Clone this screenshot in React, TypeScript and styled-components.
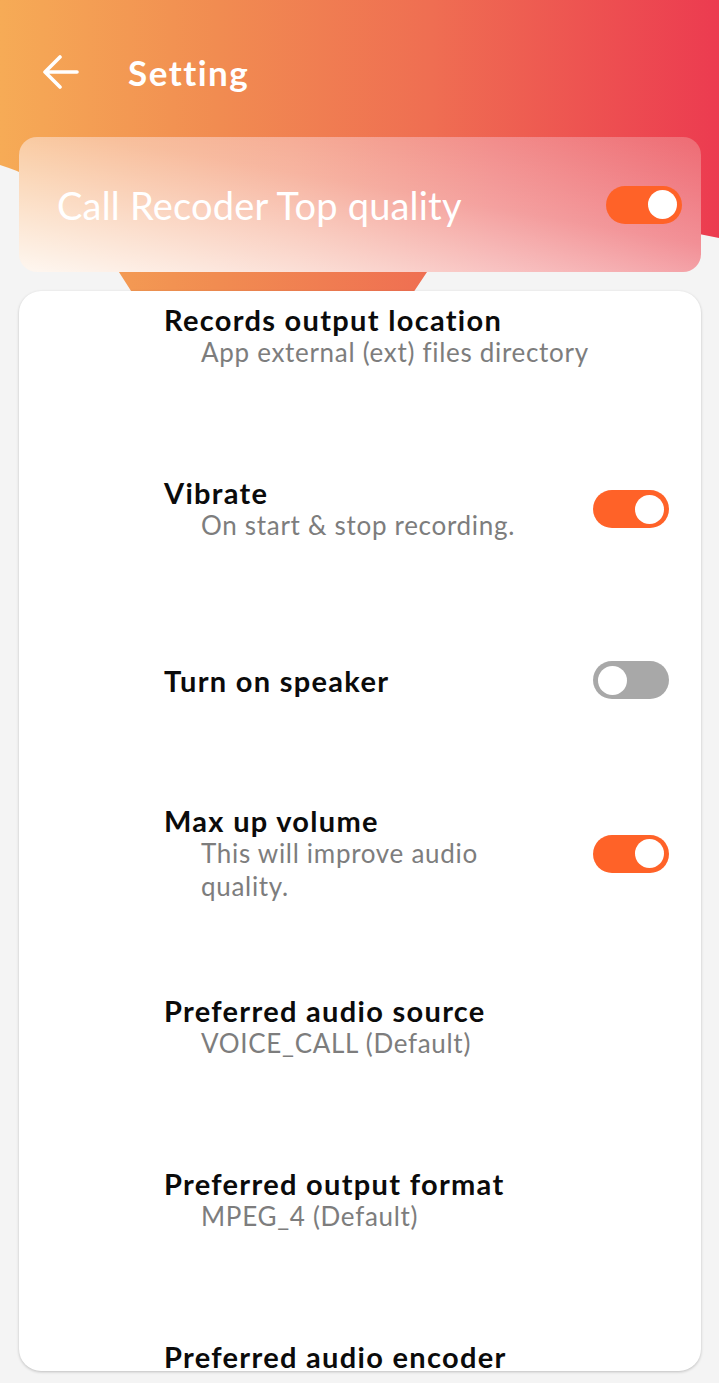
import React from 'react'
import styled, { createGlobalStyle } from 'styled-components'

const GlobalStyle = createGlobalStyle`
    html, body {
        margin: 0;
        padding: 0;
        background: #f4f4f4;
    }
    * {
        box-sizing: border-box;
    }
`

const Page = styled.div`
    position: relative;
    width: 719px;
    min-height: 1383px;
    padding-bottom: 12px;
    overflow: hidden;
    background: #f4f4f4;
    font-family: 'Lato', 'Noto Sans', sans-serif;
`
const HeaderShape = styled.svg`
    position: absolute;
    top: 0;
    left: 0;
    z-index: 0;
`
const Content = styled.div`
    position: relative;
    z-index: 1;
    display: flex;
    flex-direction: column;
`
const TopBar = styled.div`
    display: flex;
    align-items: center;
    gap: 49px;
    height: 137px;
    padding: 7px 0 0 43px;
`
const BackButton = styled.button`
    display: flex;
    padding: 0;
    border: 0;
    background: none;
`
const Title = styled.h1`
    margin: 0;
    font-size: 35px;
    font-weight: 700;
    line-height: 40px;
    letter-spacing: 1.5px;
    color: #ffffff;
`
const QualityCard = styled.div`
    display: flex;
    align-items: center;
    justify-content: space-between;
    height: 135px;
    margin: 0 18px 0 19px;
    padding: 0 19px 0 38px;
    border-radius: 18px;
    background:
        linear-gradient(
            190deg,
            rgba(255, 255, 255, 0.1) 0%,
            rgba(255, 255, 255, 0.32) 42%,
            rgba(255, 255, 255, 0.9) 100%
        ),
        linear-gradient(90deg, #f6ad6c 0%, #f39274 40%, #ef7472 70%, #ec5a64 100%);
`
const QualityText = styled.span`
    font-size: 38px;
    font-weight: 400;
    letter-spacing: 0.2px;
    color: #ffffff;
`
const SettingsCard = styled.div`
    display: flex;
    flex-direction: column;
    height: 1080px;
    margin: 19px 18px 0 19px;
    padding-top: 12px;
    border-radius: 22px;
    background: #ffffff;
    box-shadow: 0 1px 3px rgba(0, 0, 0, 0.22);
    overflow: hidden;
`
const Row = styled.div<{ $after: number }>`
    display: flex;
    align-items: center;
    flex-shrink: 0;
    margin-bottom: ${(p) => p.$after}px;
    padding: 0 32px 0 145px;
`
const RowText = styled.div`
    flex: 1;
    display: flex;
    flex-direction: column;
`
const RowTitle = styled.span`
    font-size: 29px;
    font-weight: 700;
    line-height: 33px;
    letter-spacing: 1.3px;
    color: #0b0b0b;
`
const RowSummary = styled.span<{ $narrow?: boolean }>`
    margin-left: 37px;
    max-width: ${(p) => (p.$narrow ? '330px' : 'none')};
    font-size: 26px;
    font-weight: 400;
    line-height: 33px;
    letter-spacing: 0.7px;
    color: #7d7d7d;
`
const Track = styled.span<{ $on: boolean }>`
    display: flex;
    justify-content: ${(p) => (p.$on ? 'flex-end' : 'flex-start')};
    align-items: center;
    flex-shrink: 0;
    width: 76px;
    height: 38px;
    padding: 0 5px;
    border-radius: 19px;
    background: ${(p) => (p.$on ? '#ff6228' : '#a8a8a8')};
`
const Knob = styled.span`
    width: 29px;
    height: 29px;
    border-radius: 50%;
    background: #ffffff;
`

const Switch = ({ on }: { on: boolean }) => (
    <Track $on={on}>
        <Knob />
    </Track>
)

type Pref = {
    title: string
    summary?: string
    toggle?: boolean
    after: number
}

const prefs: Pref[] = [
    { title: 'Records output location', summary: 'App external (ext) files directory', after: 107 },
    { title: 'Vibrate', summary: 'On start & stop recording.', toggle: true, after: 119 },
    { title: 'Turn on speaker', toggle: false, after: 105 },
    { title: 'Max up volume', summary: 'This will improve audio quality.', toggle: true, after: 91 },
    { title: 'Preferred audio source', summary: 'VOICE_CALL (Default)', after: 107 },
    { title: 'Preferred output format', summary: 'MPEG_4 (Default)', after: 107 },
    { title: 'Preferred audio encoder', summary: 'AAC (Default)', after: 107 },
]

const App = () => {
    return (
        <Page>
            <GlobalStyle />
            <HeaderShape width="719" height="340" viewBox="0 0 719 340">
                <defs>
                    <linearGradient id="headerFill" x1="0" y1="0" x2="1" y2="0">
                        <stop offset="0" stopColor="#f6ab56" />
                        <stop offset="0.3" stopColor="#f18c51" />
                        <stop offset="0.6" stopColor="#ef6e52" />
                        <stop offset="1" stopColor="#ec3b50" />
                    </linearGradient>
                </defs>
                <path
                    d="M0 0 H719 V238 C620 218 500 212 445 245 L405 305 Q273 345 140 305 L110 258 C85 215 45 178 0 165 Z"
                    fill="url(#headerFill)"
                />
            </HeaderShape>
            <Content>
                <TopBar>
                    <BackButton aria-label="Back">
                        <svg width="36" height="34" viewBox="0 0 36 34" fill="none">
                            <path
                                d="M34 17 H3 M17 2 L2 17 L17 32"
                                stroke="#ffffff"
                                strokeWidth="3.6"
                                strokeLinecap="round"
                                strokeLinejoin="round"
                            />
                        </svg>
                    </BackButton>
                    <Title>Setting</Title>
                </TopBar>
                <QualityCard>
                    <QualityText>Call Recoder Top quality</QualityText>
                    <Switch on />
                </QualityCard>
                <SettingsCard>
                    {prefs.map((pref) => (
                        <Row key={pref.title} $after={pref.after}>
                            <RowText>
                                <RowTitle>{pref.title}</RowTitle>
                                {pref.summary && (
                                    <RowSummary $narrow={pref.toggle !== undefined}>
                                        {pref.summary}
                                    </RowSummary>
                                )}
                            </RowText>
                            {pref.toggle !== undefined && <Switch on={pref.toggle} />}
                        </Row>
                    ))}
                </SettingsCard>
            </Content>
        </Page>
    )
}

export default App
